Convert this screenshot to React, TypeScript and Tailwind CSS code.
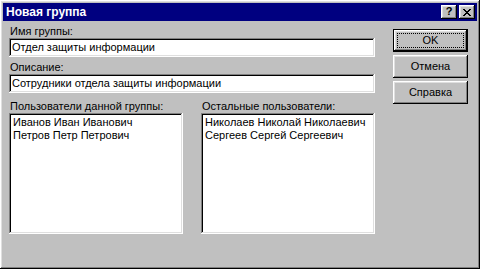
import React from 'react';

const raised =
  'shadow-[inset_-1px_-1px_#000,inset_1px_1px_#fff,inset_-2px_-2px_#808080,inset_2px_2px_#dfdfdf]';
const sunken =
  'shadow-[inset_-1px_-1px_#fff,inset_1px_1px_#808080,inset_-2px_-2px_#dfdfdf,inset_2px_2px_#000]';

const members = ['Иванов Иван Иванович', 'Петров Петр Петрович'];
const others = ['Николаев Николай Николаевич', 'Сергеев Сергей Сергеевич'];

const Field: React.FC<{ label: string; value: string; gap: string }> = ({ label, value, gap }) => (
  <div className={gap}>
    <div className="h-[13px] leading-[13px] pl-px">{label}</div>
    <div className={`h-[19px] bg-white ${sunken} flex items-center pl-[3px] leading-[13px]`}>{value}</div>
  </div>
);

const UserList: React.FC<{ label: string; items: string[] }> = ({ label, items }) => (
  <div className="w-[174px] flex flex-col">
    <div className="h-[13px] leading-[13px] pl-px">{label}</div>
    <div className={`h-[121px] bg-white ${sunken} pt-[3px] pl-[4px]`}>
      {items.map(u => (
        <div key={u} className="h-[13px] leading-[13px] whitespace-nowrap">{u}</div>
      ))}
    </div>
  </div>
);

const DlgButton: React.FC<{ label: string; isDefault?: boolean }> = ({ label, isDefault }) =>
  isDefault ? (
    <div className="h-[23px] w-[75px] border border-black">
      <div className={`h-full w-full bg-[#c0c0c0] ${raised} p-[3px]`}>
        <div className="h-full w-full border border-dotted border-black flex items-center justify-center leading-[13px]">
          {label}
        </div>
      </div>
    </div>
  ) : (
    <div className={`h-[23px] w-[75px] bg-[#c0c0c0] ${raised} flex items-center justify-center leading-[13px]`}>
      {label}
    </div>
  );

const App: React.FC = () => {
  return (
    <div
      className={`w-[480px] h-[269px] bg-[#c0c0c0] ${raised} p-[3px] flex flex-col text-[11px] text-black`}
      style={{ fontFamily: '"Liberation Sans", Arial, sans-serif' }}
    >
      {/* title bar */}
      <div className="h-[18px] bg-[#000080] flex items-center pl-[2px] pr-[2px]">
        <span className="flex-1 text-white font-bold text-[12px] leading-[14px] pl-px">Новая группа</span>
        <div className="flex gap-[2px]">
          <div className={`w-[16px] h-[14px] bg-[#c0c0c0] ${raised} flex items-center justify-center font-bold text-[11px] leading-none pb-px`}>
            ?
          </div>
          <div className={`w-[16px] h-[14px] bg-[#c0c0c0] ${raised} flex items-center justify-center`}>
            <svg width="8" height="7" viewBox="0 0 8 7" shapeRendering="crispEdges">
              <path d="M0 0h2v1h-2zM6 0h2v1h-2zM1 1h2v1h-2zM5 1h2v1h-2zM2 2h4v1h-4zM3 3h2v1h-2zM2 4h4v1h-4zM1 5h2v1h-2zM5 5h2v1h-2zM0 6h2v1h-2zM6 6h2v1h-2z" fill="#000" />
            </svg>
          </div>
        </div>
      </div>

      {/* body */}
      <div className="flex pl-[6px] pt-[4px]">
        <div className="w-[366px] flex flex-col">
          <Field label="Имя группы:" value="Отдел защиты информации" gap="" />
          <Field label="Описание:" value="Сотрудники отдела защиты информации" gap="mt-[4px]" />
          <div className="flex justify-between mt-[7px]">
            <UserList label="Пользователи данной группы:" items={members} />
            <UserList label="Остальные пользователи:" items={others} />
          </div>
        </div>
        <div className="ml-[18px] mt-[4px] flex flex-col gap-[3px]">
          <DlgButton label="OK" isDefault />
          <DlgButton label="Отмена" />
          <DlgButton label="Справка" />
        </div>
      </div>
    </div>
  );
};

export default App;
